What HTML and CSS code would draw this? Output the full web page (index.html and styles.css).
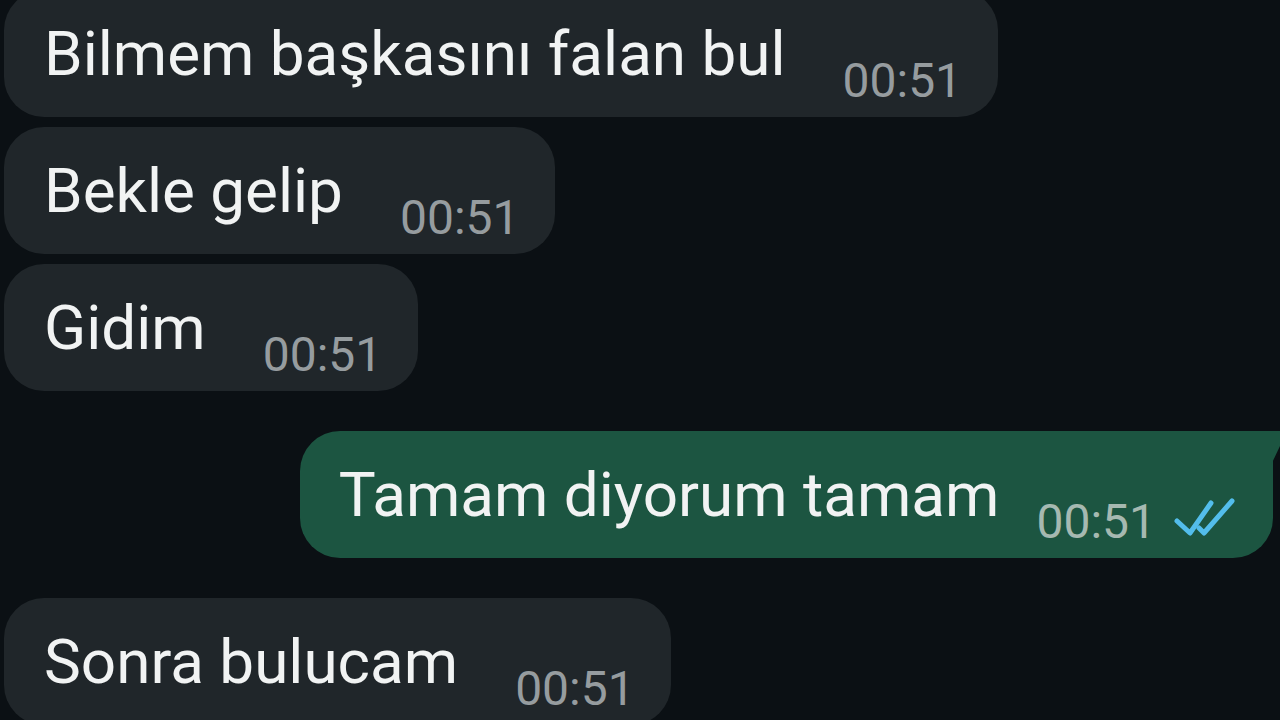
FILE: index.html
```html
<!DOCTYPE html>
<html lang="tr">
<head>
    <meta charset="UTF-8">
    <meta name="viewport" content="width=device-width, initial-scale=1.0">
    <title>Sohbet</title>
    <link rel="stylesheet" href="styles.css">
</head>
<body>

    <div class="chat">
        <!-- Incoming group -->
        <div class="row in first">
            <div class="bubble">
                <span class="text">Bilmem başkasını falan bul</span>
                <span class="time">00:51</span>
            </div>
        </div>
        <div class="row in">
            <div class="bubble">
                <span class="text">Bekle gelip</span>
                <span class="time">00:51</span>
            </div>
        </div>
        <div class="row in">
            <div class="bubble">
                <span class="text">Gidim</span>
                <span class="time">00:51</span>
            </div>
        </div>

        <!-- Outgoing message -->
        <div class="row out group">
            <div class="bubble tail">
                <span class="text">Tamam diyorum tamam</span>
                <span class="time">00:51</span>
                <svg class="ticks" width="64" height="40" viewBox="0 0 64 40">
                    <path d="M3 23 L16 35 L37 5" fill="none" stroke="#53bdeb" stroke-width="5" stroke-linecap="round" stroke-linejoin="round"/>
                    <path d="M25 30 L30 35 L58 3" fill="none" stroke="#53bdeb" stroke-width="5" stroke-linecap="round" stroke-linejoin="round"/>
                </svg>
            </div>
        </div>

        <!-- Incoming again -->
        <div class="row in group">
            <div class="bubble">
                <span class="text">Sonra bulucam</span>
                <span class="time">00:51</span>
            </div>
        </div>
    </div>

</body>
</html>
```

FILE: styles.css
```css
/* Page: dark chat background */
body {
    margin: 0;
    padding: 0;
    height: 100vh;
    overflow: hidden;
    background-color: #0b1014;
    font-family: Roboto, "Noto Sans", Arial, sans-serif;
    color: #f1f3f3;
}

/* Message list */
.chat {
    display: flex;
    flex-direction: column;
    gap: 10px;
    margin-top: -10px;
}

.row {
    display: flex;
}

.row.in {
    justify-content: flex-start;
    padding-left: 4px;
}

.row.out {
    justify-content: flex-end;
    padding-right: 7px;
}

/* Space between sender groups */
.row.group {
    margin-top: 30px;
}

/* Bubble */
.bubble {
    position: relative;
    display: flex;
    align-items: flex-end;
    height: 127px;
    box-sizing: border-box;
    padding: 28px 36px 8px 40px;
    border-radius: 40px;
    background-color: #20262a; /* incoming grey */
}

.row.out .bubble {
    background-color: #1c5541; /* outgoing green */
    padding: 28px 35px 8px 39px;
    border-top-right-radius: 0;
}

/* Small tail on the outgoing bubble */
.bubble.tail::after {
    content: "";
    position: absolute;
    top: 0;
    right: -14px;
    width: 16px;
    height: 34px;
    background-color: #1c5541;
    clip-path: polygon(0 0, 100% 0, 0 100%);
}

.text {
    font-size: 62px;
    line-height: 72px;
    margin-bottom: 19px;
    white-space: nowrap;
}

.time {
    font-size: 48px;
    line-height: 56px;
    color: #969c9f;
    margin-left: 57px;
}

.row.out .time {
    color: #a6b9b1;
    margin-left: 37px;
}

.ticks {
    margin-left: 18px;
    margin-bottom: 12px;
}
```
